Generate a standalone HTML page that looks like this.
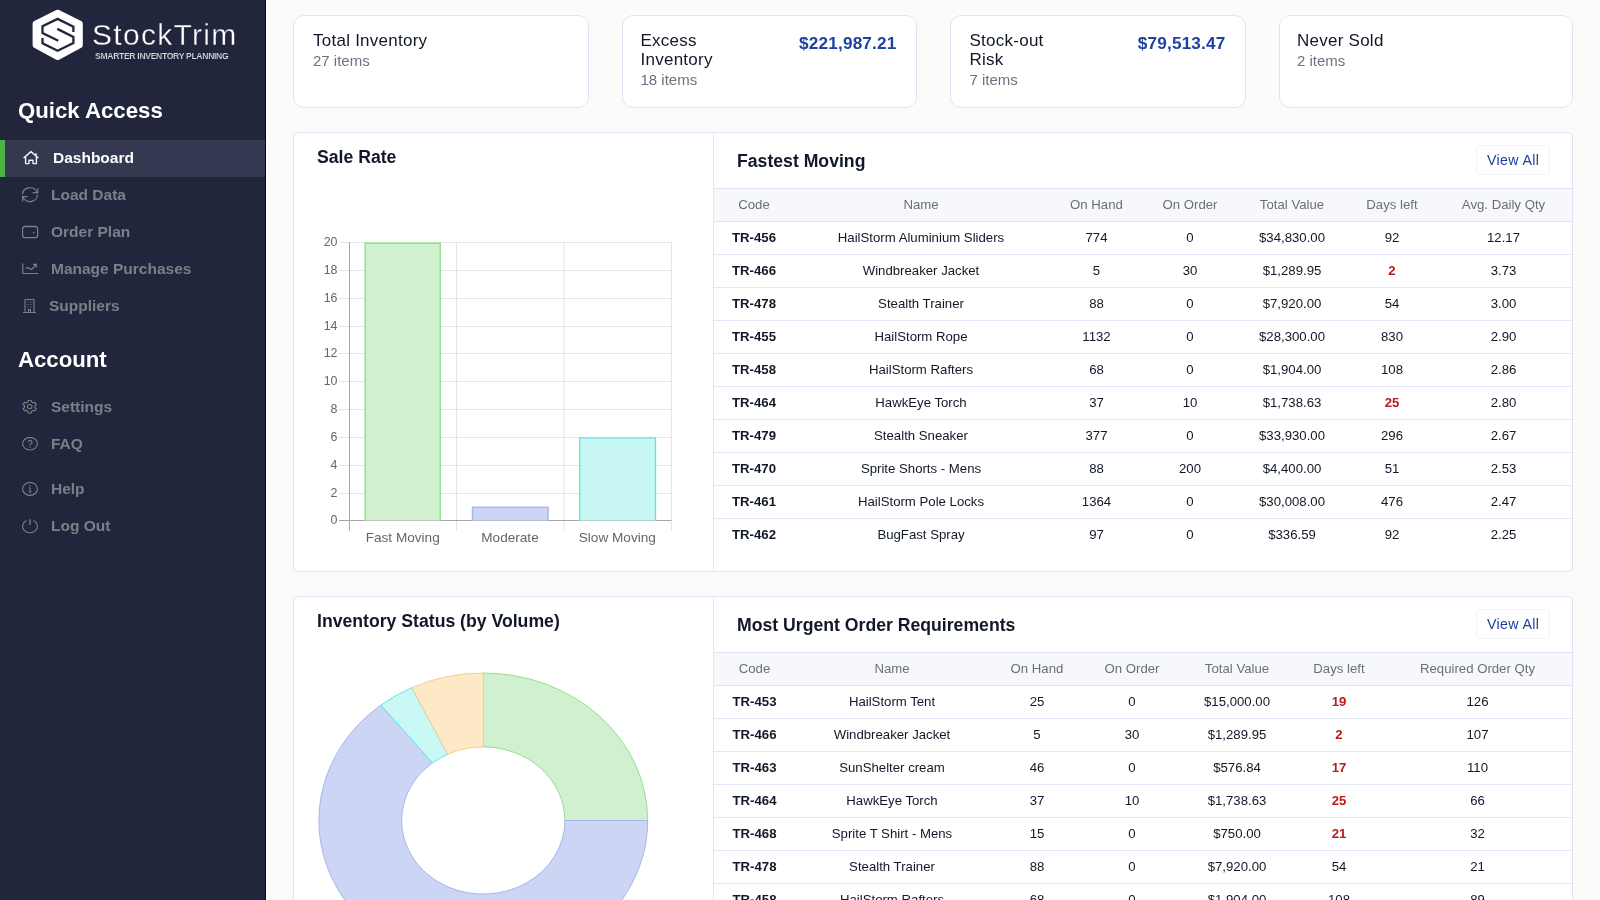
<!DOCTYPE html>
<html><head><meta charset="utf-8">
<style>
*{box-sizing:border-box;margin:0;padding:0}
html,body{width:1600px;height:900px;overflow:hidden;background:#fbfbfa;font-family:"Liberation Sans",sans-serif;color:#111827}
.abs{position:absolute}
#sb{position:absolute;left:0;top:0;width:266px;height:900px;background:#21263c;border-right:1px solid #05060a;box-shadow:1px 0 0 #fff}
.logo-t{position:absolute;left:92px;top:18px;font-size:30px;color:#fff;white-space:nowrap;letter-spacing:1.3px;-webkit-text-stroke:0.35px #21263c}
.logo-s{position:absolute;left:95px;top:51px;font-size:8.6px;font-weight:bold;color:#dcdde2;white-space:nowrap;letter-spacing:-0.32px;-webkit-text-stroke:0.15px #21263c}
.sh{position:absolute;left:18px;font-size:22.2px;font-weight:bold;color:#fff;white-space:nowrap}
.nav{position:absolute;left:0;width:265px;height:37px;font-size:15.5px;font-weight:bold;color:#7c7f88;white-space:nowrap}
.nav .tx{position:absolute;left:51px;top:0;line-height:36px}
.nav svg{position:absolute;left:22px;top:10px}
.nav.act{background:#343851;color:#fff}
.nav.act:before{content:"";position:absolute;left:0;top:0;width:5px;height:37px;background:#4cb447}
.card{position:absolute;top:15px;height:93px;background:#fff;border:1px solid #dde4f8;border-radius:11px}
.card .t{position:absolute;left:19px;top:14.6px;font-size:17px;line-height:19px;color:#111827;letter-spacing:0.25px}
.card .s{position:absolute;font-size:15px;color:#6b7280;line-height:19px}
.card .v{position:absolute;right:19.5px;top:18px;font-size:17.2px;font-weight:bold;color:#1d42a0;line-height:19px;letter-spacing:0.17px}
.panel{position:absolute;left:293px;width:1280px;background:#fff;border:1px solid #dde4f8;border-radius:5px}
.ptitle{position:absolute;font-size:17.65px;font-weight:bold;color:#111827;white-space:nowrap}
.divv{position:absolute;top:0;bottom:0;left:419px;border-left:1px solid #e3e8f8}
.btn{position:absolute;width:74px;height:30px;border:1px solid #f1f3f7;border-radius:4px;font-size:14.2px;color:#1c3f9c;text-align:center;line-height:28.5px;letter-spacing:0.35px;text-indent:0.35px}
table{border-collapse:collapse;position:absolute;left:714px;table-layout:fixed;font-size:13.2px}
th{height:33px;font-weight:normal;color:#6b6f78;background:#f7f8fb;border-top:1px solid #dfe5f8;border-bottom:1px solid #dfe5f8;text-align:center;padding:0 0 2px 0}
td{height:33px;border-bottom:1px solid #e3e8f8;text-align:center;padding:0 0 2px 0;color:#111827}
td.c{font-weight:bold}
.t1 tr:last-child td{border-bottom:none}
td.r{color:#b91c1c;font-weight:bold}
</style></head><body>
<div id="root" style="position:absolute;left:0;top:0;width:1600px;height:900px;will-change:transform">
<div id="sb">
  <svg class="abs" style="left:0;top:0" width="100" height="70" viewBox="0 0 100 70">
    <path d="M57.7 12.8 L79.8 23.8 L79.8 45.2 L57.7 57 L35.6 45.2 L35.6 23.8 Z" fill="#fff" stroke="#fff" stroke-width="6" stroke-linejoin="round"/>
    <path d="M73.4 32.1 L73.4 26.6 L57.6 18.9 L42.5 26.3 L42.5 33.1 L58.3 40.8" fill="none" stroke="#21263c" stroke-width="2.3"/>
    <path d="M57.3 28.9 L73.4 36.9 L73.4 43 L57.6 50.8 L42.5 43.4 L42.5 37.9" fill="none" stroke="#21263c" stroke-width="2.3"/>
  </svg>
  <div class="logo-t">StockTrim</div>
  <div class="logo-s">SMARTER INVENTORY PLANNING</div>
  <div class="sh" style="top:98px">Quick Access</div>
  <div class="nav act" style="top:140px">
    <svg width="18" height="18" viewBox="0 0 18 18" style="left:22px;top:10px"><path d="M1.6 8 L9 1.6 L16.4 8 M14 6 V3.2 M3.6 6.4 V13.6 H7 V10.2 H11 V13.6 H14.4 V6.4" fill="none" stroke="#f2f2f4" stroke-width="1.4" stroke-linejoin="round"/></svg>
    <span class="tx" style="left:53px">Dashboard</span></div>
  <div class="nav" style="top:177px">
    <svg width="18" height="18" viewBox="0 0 18 18" style="left:22px;top:10px"><path d="M0.6 7.2 A7.4 6.6 0 0 1 14.8 4.8 M15.8 1.2 V5.6 H10.6 M15.4 7.6 A7.4 6.6 0 0 1 1.2 10.6 M0.6 14.4 V9.6 H5.6" fill="none" stroke="#7c7f88" stroke-width="1.2"/></svg>
    <span class="tx">Load Data</span></div>
  <div class="nav" style="top:214px">
    <svg width="18" height="18" viewBox="0 0 18 18" style="left:22px;top:10px"><rect x="0.6" y="2.6" width="15" height="11" rx="2.2" fill="none" stroke="#7c7f88" stroke-width="1.2"/><path d="M3 1.9 H13.5" stroke="#7c7f88" stroke-width="1" stroke-dasharray="1.2 0.8" opacity="0.8"/><path d="M11 8.6 H12.4" stroke="#7c7f88" stroke-width="1.2"/></svg>
    <span class="tx">Order Plan</span></div>
  <div class="nav" style="top:251px">
    <svg width="18" height="18" viewBox="0 0 18 18" style="left:22px;top:10px"><path d="M0.8 2.6 V12.5 H16.2 M3.6 7.8 Q5.5 5.5 7.5 7.5 Q9.5 9.5 11 7.2 L14 3.6 M11 3.3 H14.3 V6.6" fill="none" stroke="#7c7f88" stroke-width="1.2"/></svg>
    <span class="tx">Manage Purchases</span></div>
  <div class="nav" style="top:288px">
    <svg width="18" height="18" viewBox="0 0 18 18" style="left:22px;top:10px"><path d="M1 14.5 H14 M3 14.5 V1.5 H12 V14.5 M6.5 14.5 V11.5 H8.5 V14.5" fill="none" stroke="#7c7f88" stroke-width="1.1"/><path d="M5.5 4 h1 M8.5 4 h1 M5.5 6.5 h1 M8.5 6.5 h1 M5.5 9 h1 M8.5 9 h1" stroke="#7c7f88" stroke-width="1.2"/></svg>
    <span class="tx" style="left:49px">Suppliers</span></div>
  <div class="sh" style="top:347px">Account</div>
  <div class="nav" style="top:389px">
    <svg width="18" height="18" viewBox="0 0 18 18" style="left:22px;top:10.8px"><path d="M6.12 1.80 L6.13 0.26 L9.27 0.26 L9.28 1.80 L11.38 2.93 L12.82 2.16 L14.39 4.70 L12.96 5.47 L12.96 7.73 L14.39 8.50 L12.82 11.04 L11.38 10.27 L9.28 11.40 L9.27 12.94 L6.13 12.94 L6.12 11.40 L4.02 10.27 L2.58 11.04 L1.01 8.50 L2.44 7.73 L2.44 5.47 L1.01 4.70 L2.58 2.16 L4.02 2.93 Z" fill="none" stroke="#7c7f88" stroke-width="1.1" stroke-linejoin="round"/><ellipse cx="7.7" cy="6.6" rx="2.3" ry="2.1" fill="none" stroke="#7c7f88" stroke-width="1.1"/></svg>
    <span class="tx">Settings</span></div>
  <div class="nav" style="top:426px">
    <svg width="18" height="18" viewBox="0 0 18 18" style="left:22px;top:10.8px"><ellipse cx="8" cy="6.7" rx="7.4" ry="6.3" fill="none" stroke="#7c7f88" stroke-width="1.1"/><path d="M6.1 5.2 A1.95 1.8 0 1 1 8.7 6.9 Q8 7.3 8 8.4" fill="none" stroke="#7c7f88" stroke-width="1.1"/><circle cx="8" cy="10.1" r="0.7" fill="#7c7f88"/></svg>
    <span class="tx">FAQ</span></div>
  <div class="nav" style="top:471px">
    <svg width="18" height="18" viewBox="0 0 18 18" style="left:22px;top:10.8px"><ellipse cx="8" cy="6.9" rx="7.4" ry="6.5" fill="none" stroke="#7c7f88" stroke-width="1.1"/><path d="M8 5.8 V10 M6.7 10 H9.3 M6.9 5.8 H8" fill="none" stroke="#7c7f88" stroke-width="1.1"/><circle cx="8" cy="3.9" r="0.75" fill="#7c7f88"/></svg>
    <span class="tx">Help</span></div>
  <div class="nav" style="top:508px">
    <svg width="18" height="18" viewBox="0 0 18 18" style="left:22px;top:10.8px"><path d="M4.6 1.6 A7.4 6.4 0 1 0 11.4 1.6" fill="none" stroke="#7c7f88" stroke-width="1.1"/><path d="M8 0.3 V6" stroke="#7c7f88" stroke-width="1.3"/></svg>
    <span class="tx">Log Out</span></div>
</div>

<!-- cards -->
<div class="card" style="left:293px;width:296px"><div class="t">Total Inventory</div><div class="s" style="left:19px;top:35px">27 items</div></div>
<div class="card" style="left:622px;width:295px"><div class="t" style="left:17.5px">Excess<br>Inventory</div><div class="s" style="left:17.5px;top:54px">18 items</div><div class="v">$221,987.21</div></div>
<div class="card" style="left:950px;width:296px"><div class="t" style="left:18.5px">Stock-out<br>Risk</div><div class="s" style="left:18.5px;top:54px">7 items</div><div class="v">$79,513.47</div></div>
<div class="card" style="left:1279px;width:294px"><div class="t" style="left:17px">Never Sold</div><div class="s" style="left:17px;top:35px">2 items</div></div>

<!-- panel 1 -->
<div class="panel" style="top:132px;height:440px">
  <div class="divv"></div>
  <div class="ptitle" style="left:23px;top:14px">Sale Rate</div>
  <div class="ptitle" style="left:443px;top:18px">Fastest Moving</div>
  <div class="btn" style="left:1182px;top:12px">View All</div>
</div>

<!-- panel 2 -->
<div class="panel" style="top:596px;height:320px">
  <div class="divv"></div>
  <div class="ptitle" style="left:23px;top:14px">Inventory Status (by Volume)</div>
  <div class="ptitle" style="left:443px;top:18px">Most Urgent Order Requirements</div>
  <div class="btn" style="left:1182px;top:12px">View All</div>
</div>
<!-- charts -->
<svg class="abs" style="left:0;top:0" width="720" height="900" viewBox="0 0 720 900">
<line x1="339" x2="671.5" y1="520.50" y2="520.50" stroke="#a6a6a6" stroke-width="1"/>
<text x="337.5" y="524.40" text-anchor="end" font-size="12.4" fill="#666">0</text>
<line x1="339" x2="671.5" y1="493.50" y2="493.50" stroke="#e5e5e5" stroke-width="1"/>
<text x="337.5" y="497.40" text-anchor="end" font-size="12.4" fill="#666">2</text>
<line x1="339" x2="671.5" y1="465.50" y2="465.50" stroke="#e5e5e5" stroke-width="1"/>
<text x="337.5" y="469.40" text-anchor="end" font-size="12.4" fill="#666">4</text>
<line x1="339" x2="671.5" y1="437.50" y2="437.50" stroke="#e5e5e5" stroke-width="1"/>
<text x="337.5" y="441.40" text-anchor="end" font-size="12.4" fill="#666">6</text>
<line x1="339" x2="671.5" y1="409.50" y2="409.50" stroke="#e5e5e5" stroke-width="1"/>
<text x="337.5" y="413.40" text-anchor="end" font-size="12.4" fill="#666">8</text>
<line x1="339" x2="671.5" y1="381.50" y2="381.50" stroke="#e5e5e5" stroke-width="1"/>
<text x="337.5" y="385.40" text-anchor="end" font-size="12.4" fill="#666">10</text>
<line x1="339" x2="671.5" y1="353.50" y2="353.50" stroke="#e5e5e5" stroke-width="1"/>
<text x="337.5" y="357.40" text-anchor="end" font-size="12.4" fill="#666">12</text>
<line x1="339" x2="671.5" y1="326.50" y2="326.50" stroke="#e5e5e5" stroke-width="1"/>
<text x="337.5" y="330.40" text-anchor="end" font-size="12.4" fill="#666">14</text>
<line x1="339" x2="671.5" y1="298.50" y2="298.50" stroke="#e5e5e5" stroke-width="1"/>
<text x="337.5" y="302.40" text-anchor="end" font-size="12.4" fill="#666">16</text>
<line x1="339" x2="671.5" y1="270.50" y2="270.50" stroke="#e5e5e5" stroke-width="1"/>
<text x="337.5" y="274.40" text-anchor="end" font-size="12.4" fill="#666">18</text>
<line x1="339" x2="671.5" y1="242.50" y2="242.50" stroke="#e5e5e5" stroke-width="1"/>
<text x="337.5" y="246.40" text-anchor="end" font-size="12.4" fill="#666">20</text>
<line x1="456.5" x2="456.5" y1="242" y2="530.5" stroke="#e5e5e5" stroke-width="1"/>
<line x1="563.9" x2="563.9" y1="242" y2="530.5" stroke="#e5e5e5" stroke-width="1"/>
<line x1="671.4" x2="671.4" y1="242" y2="530.5" stroke="#e5e5e5" stroke-width="1"/>
<line x1="349.5" x2="349.5" y1="242" y2="530.5" stroke="#a6a6a6" stroke-width="1"/>
<line x1="339" x2="671.5" y1="520.5" y2="520.5" stroke="#a6a6a6" stroke-width="1"/>
<rect x="364.5" y="242.50" width="76.50" height="278.00" fill="#d0f0cf"/>
<path d="M365.25 520.5 V243.25 H440.25 V520.5" fill="none" stroke="#8ee28b" stroke-width="1.3"/>
<rect x="471.8" y="506.60" width="76.90" height="13.90" fill="#cdd5f6"/>
<path d="M472.55 520.5 V507.35 H547.95 V520.5" fill="none" stroke="#aab6ee" stroke-width="1.3"/>
<rect x="579" y="437.10" width="77.20" height="83.40" fill="#c9f7f4"/>
<path d="M579.75 520.5 V437.85 H655.45 V520.5" fill="none" stroke="#62e6e2" stroke-width="1.3"/>
<text x="402.7" y="542" text-anchor="middle" font-size="13.6" fill="#666">Fast Moving</text>
<text x="510" y="542" text-anchor="middle" font-size="13.6" fill="#666">Moderate</text>
<text x="617.3" y="542" text-anchor="middle" font-size="13.6" fill="#666">Slow Moving</text>
<path d="M483.30 673.00 A164.4 147.5 0 0 1 647.70 820.50 L564.90 820.50 A81.6 73.6 0 0 0 483.30 746.90 Z" fill="#d1f0cf" stroke="#93e08f" stroke-width="1"/>
<path d="M647.70 820.50 A164.4 147.5 0 1 1 380.96 705.07 L432.50 762.90 A81.6 73.6 0 1 0 564.90 820.50 Z" fill="#cdd5f5" stroke="#a9b5ea" stroke-width="1"/>
<path d="M380.96 705.07 A164.4 147.5 0 0 1 411.75 687.70 L447.79 754.24 A81.6 73.6 0 0 0 432.50 762.90 Z" fill="#c9f8f5" stroke="#5ee8e4" stroke-width="1"/>
<path d="M411.75 687.70 A164.4 147.5 0 0 1 483.30 673.00 L483.30 746.90 A81.6 73.6 0 0 0 447.79 754.24 Z" fill="#fde9c5" stroke="#f3d08f" stroke-width="1"/>
</svg>
<!-- tables -->
<table class="t1" style="top:188px;width:858px"><colgroup><col style="width:80px"><col style="width:254px"><col style="width:97px"><col style="width:90px"><col style="width:114px"><col style="width:86px"><col style="width:137px"></colgroup><tr><th>Code</th><th>Name</th><th>On Hand</th><th>On Order</th><th>Total Value</th><th>Days left</th><th>Avg. Daily Qty</th></tr>
<tr><td class="c">TR-456</td><td>HailStorm Aluminium Sliders</td><td>774</td><td>0</td><td>$34,830.00</td><td>92</td><td>12.17</td></tr>
<tr><td class="c">TR-466</td><td>Windbreaker Jacket</td><td>5</td><td>30</td><td>$1,289.95</td><td class="r">2</td><td>3.73</td></tr>
<tr><td class="c">TR-478</td><td>Stealth Trainer</td><td>88</td><td>0</td><td>$7,920.00</td><td>54</td><td>3.00</td></tr>
<tr><td class="c">TR-455</td><td>HailStorm Rope</td><td>1132</td><td>0</td><td>$28,300.00</td><td>830</td><td>2.90</td></tr>
<tr><td class="c">TR-458</td><td>HailStorm Rafters</td><td>68</td><td>0</td><td>$1,904.00</td><td>108</td><td>2.86</td></tr>
<tr><td class="c">TR-464</td><td>HawkEye Torch</td><td>37</td><td>10</td><td>$1,738.63</td><td class="r">25</td><td>2.80</td></tr>
<tr><td class="c">TR-479</td><td>Stealth Sneaker</td><td>377</td><td>0</td><td>$33,930.00</td><td>296</td><td>2.67</td></tr>
<tr><td class="c">TR-470</td><td>Sprite Shorts - Mens</td><td>88</td><td>200</td><td>$4,400.00</td><td>51</td><td>2.53</td></tr>
<tr><td class="c">TR-461</td><td>HailStorm Pole Locks</td><td>1364</td><td>0</td><td>$30,008.00</td><td>476</td><td>2.47</td></tr>
<tr><td class="c">TR-462</td><td>BugFast Spray</td><td>97</td><td>0</td><td>$336.59</td><td>92</td><td>2.25</td></tr>
</table>
<table class="t2" style="top:652px;width:858px"><colgroup><col style="width:81px"><col style="width:194px"><col style="width:96px"><col style="width:94px"><col style="width:116px"><col style="width:88px"><col style="width:189px"></colgroup><tr><th>Code</th><th>Name</th><th>On Hand</th><th>On Order</th><th>Total Value</th><th>Days left</th><th>Required Order Qty</th></tr>
<tr><td class="c">TR-453</td><td>HailStorm Tent</td><td>25</td><td>0</td><td>$15,000.00</td><td class="r">19</td><td>126</td></tr>
<tr><td class="c">TR-466</td><td>Windbreaker Jacket</td><td>5</td><td>30</td><td>$1,289.95</td><td class="r">2</td><td>107</td></tr>
<tr><td class="c">TR-463</td><td>SunShelter cream</td><td>46</td><td>0</td><td>$576.84</td><td class="r">17</td><td>110</td></tr>
<tr><td class="c">TR-464</td><td>HawkEye Torch</td><td>37</td><td>10</td><td>$1,738.63</td><td class="r">25</td><td>66</td></tr>
<tr><td class="c">TR-468</td><td>Sprite T Shirt - Mens</td><td>15</td><td>0</td><td>$750.00</td><td class="r">21</td><td>32</td></tr>
<tr><td class="c">TR-478</td><td>Stealth Trainer</td><td>88</td><td>0</td><td>$7,920.00</td><td>54</td><td>21</td></tr>
<tr><td class="c">TR-458</td><td>HailStorm Rafters</td><td>68</td><td>0</td><td>$1,904.00</td><td>108</td><td>89</td></tr>
<tr><td class="c">TR-465</td><td>HailStorm Tent Pegs</td><td>200</td><td>0</td><td>$900.00</td><td class="r">20</td><td>95</td></tr>
</table>
</div>
</body></html>
